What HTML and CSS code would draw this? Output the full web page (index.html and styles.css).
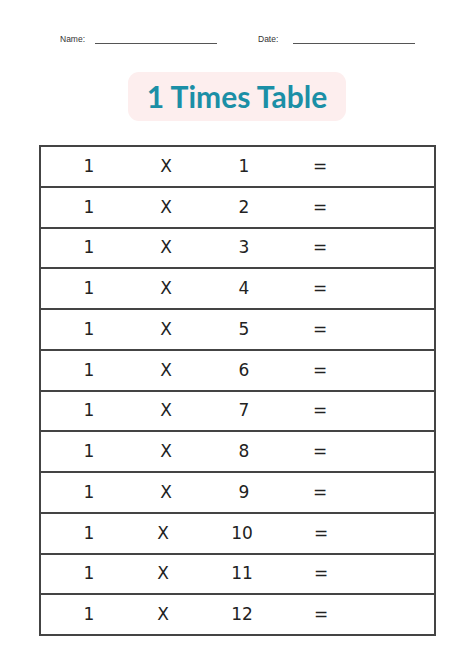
FILE: index.html
```html
<!DOCTYPE html>
<html>
<head>
<meta charset="utf-8">
<link rel="stylesheet" href="styles.css">
</head>
<body>
<div class="page">
  <div class="header">
    <div class="field name"><span class="label">Name:</span><span class="line"></span></div>
    <div class="field date"><span class="label">Date:</span><span class="line"></span></div>
  </div>
  <div class="title-wrap"><div class="title">1 Times Table</div></div>
  <div class="table">
    <div class="row"><span>1</span><span>X</span><span>1</span><span>=</span></div>
    <div class="row"><span>1</span><span>X</span><span>2</span><span>=</span></div>
    <div class="row"><span>1</span><span>X</span><span>3</span><span>=</span></div>
    <div class="row"><span>1</span><span>X</span><span>4</span><span>=</span></div>
    <div class="row"><span>1</span><span>X</span><span>5</span><span>=</span></div>
    <div class="row"><span>1</span><span>X</span><span>6</span><span>=</span></div>
    <div class="row"><span>1</span><span>X</span><span>7</span><span>=</span></div>
    <div class="row"><span>1</span><span>X</span><span>8</span><span>=</span></div>
    <div class="row"><span>1</span><span>X</span><span>9</span><span>=</span></div>
    <div class="row wide"><span>1</span><span>X</span><span>10</span><span>=</span></div>
    <div class="row wide"><span>1</span><span>X</span><span>11</span><span>=</span></div>
    <div class="row wide"><span>1</span><span>X</span><span>12</span><span>=</span></div>
  </div>
</div>
</body>
</html>
```

FILE: styles.css
```css
html, body {
  margin: 0;
  padding: 0;
  background: #ffffff;
}
.page {
  width: 474px;
  height: 670px;
  box-sizing: border-box;
  padding-top: 33px;
}
.header {
  display: flex;
  padding-left: 60px;
  height: 12px;
}
.field {
  display: flex;
  align-items: flex-start;
}
.name { width: 198px; }
.label {
  font-family: "Liberation Sans", Arial, sans-serif;
  font-size: 8.5px;
  color: #333;
  line-height: 12px;
}
.name .label { width: 35px; }
.date .label { width: 35px; }
.line {
  display: block;
  width: 122px;
  height: 0;
  margin-top: 10px;
  border-top: 1px solid #555;
}
.title-wrap {
  display: flex;
  justify-content: center;
  margin-top: 27px;
}
.title {
  width: 218px;
  height: 49px;
  box-sizing: border-box;
  background: #fdeeee;
  border-radius: 11px;
  display: flex;
  align-items: center;
  justify-content: center;
  font-family: Lato, "Open Sans", sans-serif;
  font-weight: 700;
  font-size: 30px;
  color: #1b8fa6;
  padding-bottom: 1px;
}
.table {
  margin-top: 24px;
  margin-left: 39px;
  width: 397px;
  box-sizing: border-box;
  border: 2px solid #444;
  border-top: 0;
}
.row {
  height: 40.75px;
  box-sizing: border-box;
  border-top: 2px solid #444;
  display: grid;
  grid-template-columns: 96px 58px 98px 54px;
  align-items: center;
  font-family: "DejaVu Sans", sans-serif;
  font-size: 17px;
  color: #222;
}
.row span {
  text-align: center;
  padding-bottom: 1px;
}
.row.wide {
  grid-template-columns: 96px 52px 106px 52px;
}
```
